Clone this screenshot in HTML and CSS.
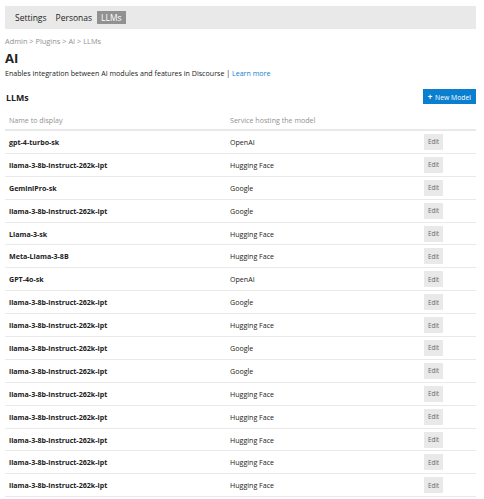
FILE: index.html
```html
<!DOCTYPE html>
<html lang="en">
<head>
    <meta charset="UTF-8">
    <title>AI - LLMs</title>
    <link rel="stylesheet" href="styles.css">
</head>
<body>
    <div class="page">
        <div class="nav-tabs">
            <a href="#" class="tab">Settings</a>
            <a href="#" class="tab">Personas</a>
            <a href="#" class="tab active">LLMs</a>
        </div>

        <div class="breadcrumb">
            <a href="#">Admin</a> &gt; <a href="#">Plugins</a> &gt; <a href="#">AI</a> &gt; <a href="#">LLMs</a>
        </div>

        <h1 class="plugin-title">AI</h1>
        <p class="plugin-desc">Enables integration between AI modules and features in Discourse | <a href="#">Learn more</a></p>

        <div class="llm-header">
            <h2>LLMs</h2>
            <button class="new-btn"><span class="plus">+</span> New Model</button>
        </div>

        <table class="llm-table">
            <thead>
                <tr>
                    <th class="col-name">Name to display</th>
                    <th class="col-provider">Service hosting the model</th>
                    <th class="col-edit"></th>
                </tr>
            </thead>
            <tbody id="llm-rows">
            </tbody>
        </table>
    </div>

    <script>
        const models = [
            ['gpt-4-turbo-sk', 'OpenAI'],
            ['llama-3-8b-instruct-262k-ipt', 'Hugging Face'],
            ['GeminiPro-sk', 'Google'],
            ['llama-3-8b-instruct-262k-ipt', 'Google'],
            ['Llama-3-sk', 'Hugging Face'],
            ['Meta-Llama-3-8B', 'Hugging Face'],
            ['GPT-4o-sk', 'OpenAI'],
            ['llama-3-8b-instruct-262k-ipt', 'Google'],
            ['llama-3-8b-instruct-262k-ipt', 'Hugging Face'],
            ['llama-3-8b-instruct-262k-ipt', 'Google'],
            ['llama-3-8b-instruct-262k-ipt', 'Google'],
            ['llama-3-8b-instruct-262k-ipt', 'Hugging Face'],
            ['llama-3-8b-instruct-262k-ipt', 'Hugging Face'],
            ['llama-3-8b-instruct-262k-ipt', 'Hugging Face'],
            ['llama-3-8b-instruct-262k-ipt', 'Hugging Face'],
            ['llama-3-8b-instruct-262k-ipt', 'Hugging Face']
        ];

        const rows = document.getElementById('llm-rows');
        models.forEach(([name, provider]) => {
            const tr = document.createElement('tr');
            tr.innerHTML = `
                <td class="col-name">${name}</td>
                <td class="col-provider">${provider}</td>
                <td class="col-edit"><button class="edit-btn">Edit</button></td>
            `;
            rows.appendChild(tr);
        });
    </script>
</body>
</html>
```

FILE: styles.css
```css
body {
    margin: 0;
    font-family: "Open Sans", sans-serif;
    background-color: #fff;
    color: #222;
}
a {
    text-decoration: none;
}
.page {
    padding: 6px 8px 0 5px;
}
.nav-tabs {
    display: flex;
    align-items: center;
    height: 23px;
    padding-left: 6px;
    background-color: #e9e9e9;
}
.tab {
    font-size: 8.5px;
    line-height: 13px;
    padding: 0 4px;
    margin-right: 1px;
    color: #222;
}
.tab.active {
    background-color: #919191;
    color: #fff;
}
.breadcrumb {
    margin-top: 7px;
    font-size: 7.4px;
    line-height: 11px;
    color: #919191;
}
.breadcrumb a {
    color: #919191;
}
.plugin-title {
    margin: 3px 0 0;
    font-size: 13px;
    line-height: 16px;
    font-weight: 700;
}
.plugin-desc {
    margin: 2px 0 0;
    font-size: 7.1px;
    line-height: 10px;
}
.plugin-desc a {
    color: #0a7fcf;
}
.llm-header {
    display: flex;
    justify-content: space-between;
    align-items: center;
    margin-top: 10px;
    height: 16px;
}
.llm-header h2 {
    margin: 0;
    font-size: 8.8px;
    font-weight: 700;
    padding-left: 1px;
    padding-top: 4px;
}
.new-btn {
    background-color: #0a7fcf;
    color: #fff;
    border: none;
    font-family: "Open Sans", sans-serif;
    font-size: 6.8px;
    height: 15px;
    padding: 0 5px;
    cursor: pointer;
}
.new-btn .plus {
    font-weight: 700;
    font-size: 8px;
    margin-right: 1px;
}
.llm-table {
    width: 100%;
    border-collapse: collapse;
    margin-top: 11px;
}
.llm-table th {
    font-size: 7.1px;
    font-weight: 400;
    color: #919191;
    text-align: left;
    padding: 0 4px 4px;
    line-height: 10px;
    border-bottom: 2px solid #e9e9e9;
}
.llm-table td {
    font-size: 7.1px;
    height: 21.9px;
    padding: 0 4px;
    border-bottom: 1px solid #e9e9e9;
}
.llm-table td.col-name {
    font-weight: 700;
}
.col-name {
    width: 213px;
}
.col-edit {
    width: 48px;
}
.edit-btn {
    background-color: #e9e9e9;
    border: none;
    color: #666;
    font-family: "Open Sans", sans-serif;
    font-size: 6.2px;
    width: 19px;
    height: 16px;
    padding: 0;
    cursor: pointer;
}
```
